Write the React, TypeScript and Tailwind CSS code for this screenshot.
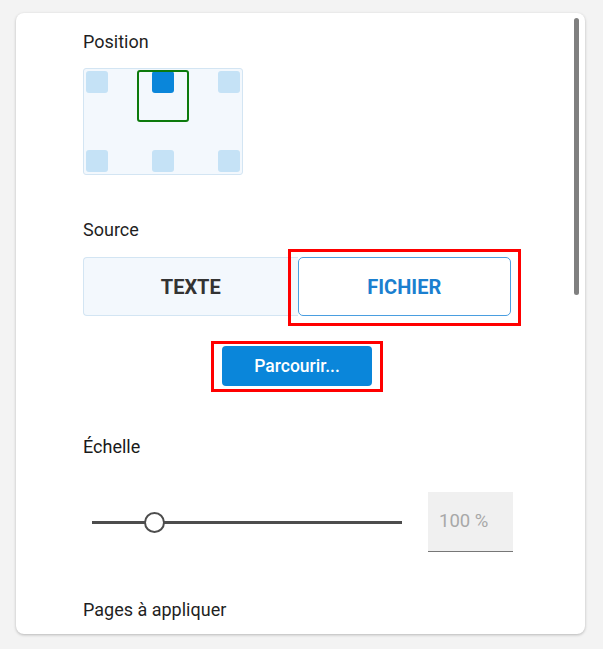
const Square = ({ active }: { active?: boolean }) => (
  <div className={active ? "size-[22px] rounded-[3px] bg-[#0a86da]" : "size-[22px] rounded-[3px] bg-[#c5e2f6]"} />
);

export default function App() {
  return (
    <div className="min-h-[649px] w-full bg-[#f3f3f3] px-4 pt-[13px] font-['Roboto',sans-serif] text-[#333]">
      <div className="relative h-[621px] w-[569px] overflow-hidden rounded-[8px] bg-white pl-[67px] pt-[17px] shadow-[0_1px_3px_rgba(0,0,0,0.25)]">
        {/* scrollbar */}
        <div className="absolute right-[6px] top-[5px] h-[277px] w-[5px] rounded-full bg-[#808080]" />

        <div className="text-[18px] leading-6 text-[#1f1f1f]">Position</div>

        <div className="relative mt-[14px] flex h-[107px] w-[160px] flex-col justify-between rounded-[3px] border border-[#d3e5f3] bg-[#f3f8fd] p-[2px]">
          <div className="flex justify-between">
            <Square />
            <Square active />
            <Square />
          </div>
          <div className="flex justify-between">
            <Square />
            <Square />
            <Square />
          </div>
          <div className="absolute left-[53px] top-[1px] size-[52px] rounded-[3px] border-2 border-[#0c7a0c]" />
        </div>

        <div className="mt-[43px] text-[18px] leading-6 text-[#1f1f1f]">Source</div>

        <div className="mt-[15px] flex w-[428px] flex-col items-center">
          <div className="flex h-[59px] w-full">
            <button className="flex flex-1 items-center justify-center rounded-l-[4px] border border-r-0 border-[#d3e5f3] bg-[#f3f8fd] text-[20px] font-bold text-[#333]">
              TEXTE
            </button>
            <div className="relative flex flex-1">
              <button className="flex flex-1 items-center justify-center rounded-[5px] border-[1.5px] border-[#4a9ee0] bg-white text-[20px] font-bold text-[#1b7fcf]">
                FICHIER
              </button>
              <div className="absolute -bottom-[10px] -left-[10px] -right-[10px] -top-[8px] border-[3px] border-[#ff0000]" />
            </div>
          </div>
          <div className="relative mt-[30px]">
            <button className="h-[40px] w-[150px] rounded-[4px] bg-[#0a86da] text-[17.5px] font-medium text-white">
              Parcourir...
            </button>
            <div className="absolute -bottom-[6px] -left-[11px] -right-[11px] -top-[5px] border-[3px] border-[#ff0000]" />
          </div>
        </div>

        <div className="mt-[49px] text-[18px] leading-6 text-[#1a1a1a]">Échelle</div>

        <div className="mt-[33px] flex items-center">
          <div className="relative ml-[9px] h-[3px] w-[310px] bg-[#4d4d4d]">
            <div className="absolute left-[52px] top-[-9px] size-[21px] rounded-full border-[2.5px] border-[#4d4d4d] bg-white" />
          </div>
          <div className="ml-[26px] flex h-[60px] w-[85px] items-center border-b border-[#777] bg-[#f0f0f0] pl-[11px] text-[18.5px] text-[#a8a8a8]">
            100 %
          </div>
        </div>

        <div className="mt-[46px] text-[18px] leading-6 text-[#1f1f1f]">Pages à appliquer</div>
      </div>
    </div>
  );
}
